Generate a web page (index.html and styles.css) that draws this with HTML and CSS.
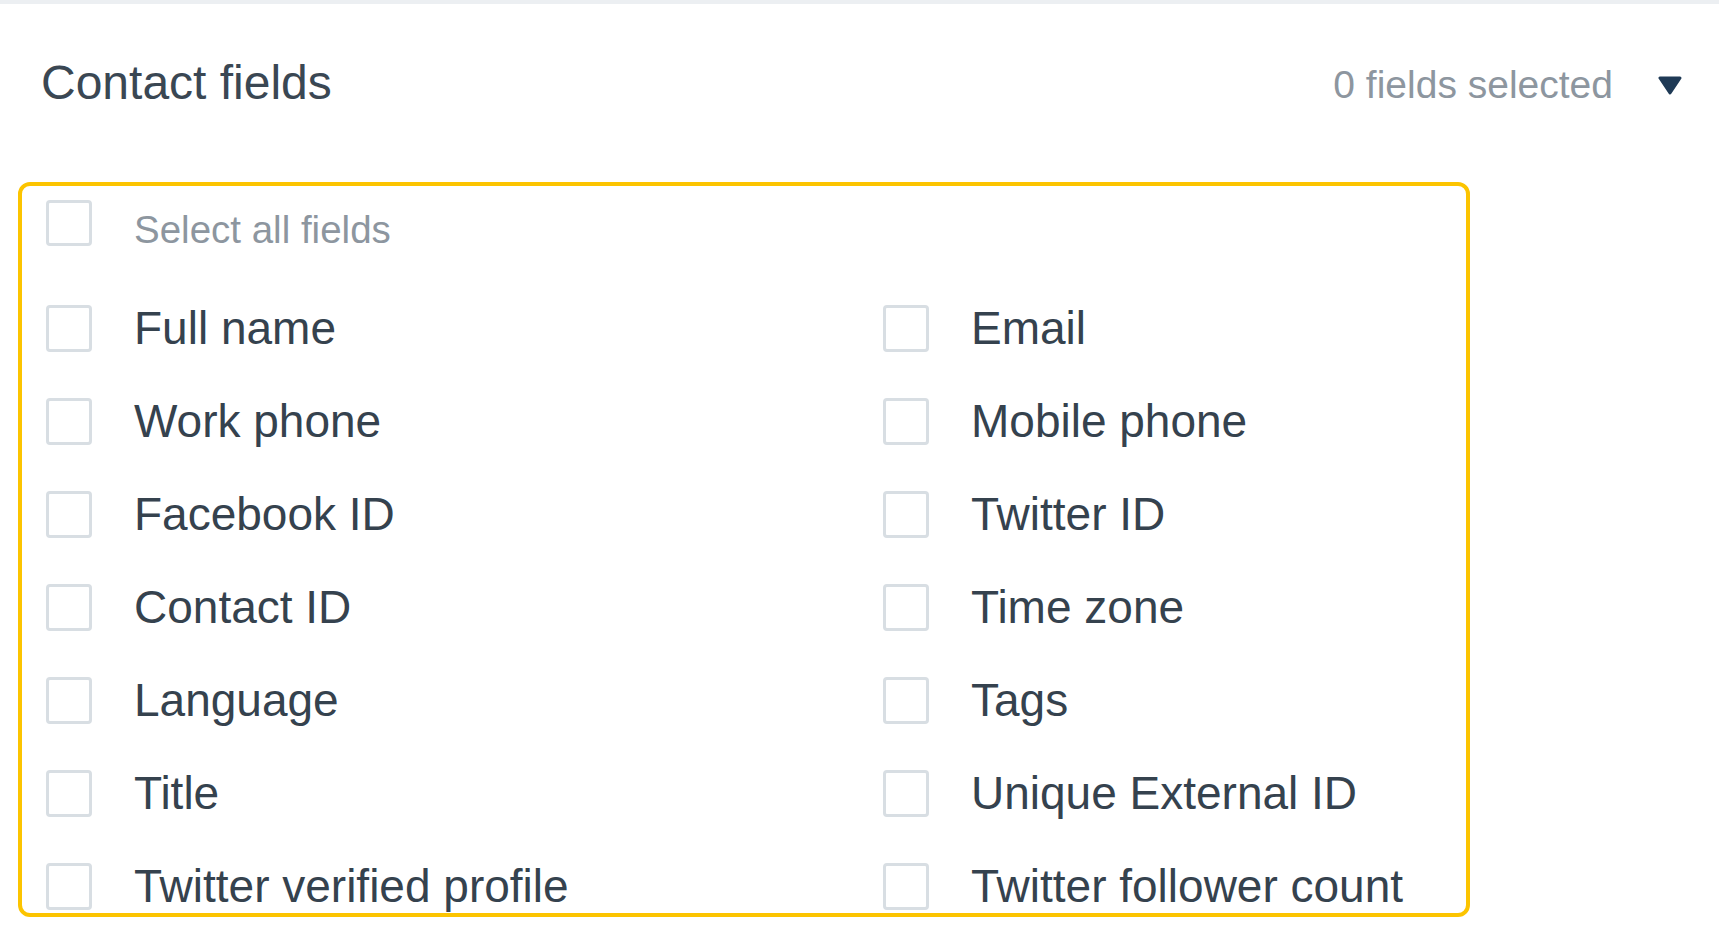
FILE: index.html
```html
<!DOCTYPE html>
<html lang="en">
<head>
<meta charset="utf-8">
<title>Contact fields</title>
<link rel="stylesheet" href="styles.css">
</head>
<body>
<div class="topbar"></div>
<header class="header">
  <h2 class="title">Contact fields</h2>
  <div class="summary">
    <span class="summary-text">0 fields selected</span>
    <svg class="caret" width="24" height="19" viewBox="0 0 24 19" aria-hidden="true">
      <polygon points="2,2 22,2 12,17" fill="#1f3a56" stroke="#1f3a56" stroke-width="3" stroke-linejoin="round"/>
    </svg>
  </div>
</header>
<section class="box">
  <label class="select-all">
    <span class="check"></span>
    <span class="select-label">Select all fields</span>
  </label>
  <div class="fields">
    <label class="field"><span class="check"></span><span class="field-label">Full name</span></label>
    <label class="field"><span class="check"></span><span class="field-label">Email</span></label>
    <label class="field"><span class="check"></span><span class="field-label">Work phone</span></label>
    <label class="field"><span class="check"></span><span class="field-label">Mobile phone</span></label>
    <label class="field"><span class="check"></span><span class="field-label">Facebook ID</span></label>
    <label class="field"><span class="check"></span><span class="field-label">Twitter ID</span></label>
    <label class="field"><span class="check"></span><span class="field-label">Contact ID</span></label>
    <label class="field"><span class="check"></span><span class="field-label">Time zone</span></label>
    <label class="field"><span class="check"></span><span class="field-label">Language</span></label>
    <label class="field"><span class="check"></span><span class="field-label">Tags</span></label>
    <label class="field"><span class="check"></span><span class="field-label">Title</span></label>
    <label class="field"><span class="check"></span><span class="field-label">Unique External ID</span></label>
    <label class="field"><span class="check"></span><span class="field-label">Twitter verified profile</span></label>
    <label class="field"><span class="check"></span><span class="field-label">Twitter follower count</span></label>
  </div>
</section>
</body>
</html>
```

FILE: styles.css
```css
* { box-sizing: border-box; }

html, body {
  margin: 0;
  padding: 0;
  background: #ffffff;
  font-family: "Liberation Sans", Arial, sans-serif;
  overflow: hidden;
}

.topbar {
  height: 4px;
  background: #eceff2;
}

.header {
  display: flex;
  justify-content: space-between;
  align-items: flex-start;
  margin-top: 49px;
  padding: 0 37px 0 41px;
  height: 60px;
}

.title {
  margin: 0;
  font-size: 48px;
  line-height: 60px;
  font-weight: normal;
  color: #3a4753;
}

.summary {
  display: flex;
  align-items: center;
  gap: 45px;
  height: 60px;
  padding-top: 4px;
}

.summary-text {
  font-size: 39px;
  line-height: 56px;
  color: #8d969f;
}

.caret { display: block; }

.box {
  margin: 69px 0 0 18px;
  width: 1452px;
  height: 735px;
  border: 4px solid #fcc400;
  border-radius: 12px;
  padding: 14px 24px 0;
  overflow: hidden;
}

.select-all {
  display: flex;
  align-items: flex-start;
  gap: 42px;
  height: 46px;
  margin-bottom: 59px;
}

.select-label {
  margin-top: 7px;
  font-size: 38.5px;
  line-height: 46px;
  color: #8d969f;
}

.check {
  flex: none;
  width: 46px;
  height: 46px;
  border: 3px solid #d8dee3;
  border-radius: 4px;
  background: #ffffff;
}

.fields {
  display: grid;
  grid-template-columns: 837px 1fr;
  grid-auto-rows: 47px;
  row-gap: 46px;
}

.field {
  display: flex;
  align-items: center;
  gap: 42px;
}

.field .check { height: 47px; }

.field-label {
  font-size: 46px;
  line-height: 47px;
  color: #35424e;
  white-space: nowrap;
}
```
